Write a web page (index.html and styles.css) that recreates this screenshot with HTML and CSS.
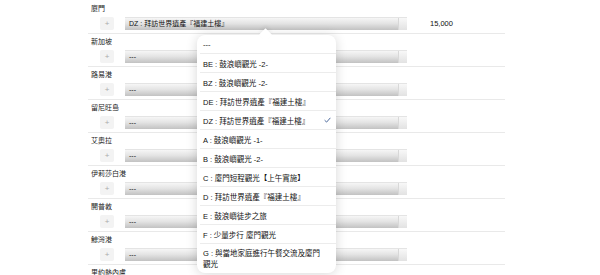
FILE: index.html
```html
<!DOCTYPE html>
<html>
<head>
    <title>行程選擇</title>
    <link rel="stylesheet" href="styles.css">
</head>
<body>
    <div class="page">
        <div class="port-row">
            <div class="port-name">廈門</div>
            <div class="port-controls">
                <span class="add-btn">+</span>
                <div class="tour-select"><span class="tour-value">DZ : 拜訪世界遺產『福建土樓』</span><span class="select-cap"></span></div>
                <span class="price">15,000</span>
            </div>
        </div>
        <div class="port-row">
            <div class="port-name">新加坡</div>
            <div class="port-controls">
                <span class="add-btn">+</span>
                <div class="tour-select"><span class="tour-value">---</span><span class="select-cap"></span></div>
            </div>
        </div>
        <div class="port-row">
            <div class="port-name">路易港</div>
            <div class="port-controls">
                <span class="add-btn">+</span>
                <div class="tour-select"><span class="tour-value">---</span><span class="select-cap"></span></div>
            </div>
        </div>
        <div class="port-row">
            <div class="port-name">留尼旺島</div>
            <div class="port-controls">
                <span class="add-btn">+</span>
                <div class="tour-select"><span class="tour-value">---</span><span class="select-cap"></span></div>
            </div>
        </div>
        <div class="port-row">
            <div class="port-name">艾奧拉</div>
            <div class="port-controls">
                <span class="add-btn">+</span>
                <div class="tour-select"><span class="tour-value">---</span><span class="select-cap"></span></div>
            </div>
        </div>
        <div class="port-row">
            <div class="port-name">伊莉莎白港</div>
            <div class="port-controls">
                <span class="add-btn">+</span>
                <div class="tour-select"><span class="tour-value">---</span><span class="select-cap"></span></div>
            </div>
        </div>
        <div class="port-row">
            <div class="port-name">開普敦</div>
            <div class="port-controls">
                <span class="add-btn">+</span>
                <div class="tour-select"><span class="tour-value">---</span><span class="select-cap"></span></div>
            </div>
        </div>
        <div class="port-row">
            <div class="port-name">鯨灣港</div>
            <div class="port-controls">
                <span class="add-btn">+</span>
                <div class="tour-select"><span class="tour-value">---</span><span class="select-cap"></span></div>
            </div>
        </div>
        <div class="port-row">
            <div class="port-name">里約熱內盧</div>
            <div class="port-controls">
                <span class="add-btn">+</span>
                <div class="tour-select"><span class="tour-value">---</span><span class="select-cap"></span></div>
            </div>
        </div>

        <!-- option popover of the first select -->
        <div class="popover">
            <span class="popover-arrow"></span>
            <ul class="option-list">
                <li class="option">---</li>
                <li class="option">BE : 鼓浪嶼觀光 -2-</li>
                <li class="option">BZ : 鼓浪嶼觀光 -2-</li>
                <li class="option">DE : 拜訪世界遺產『福建土樓』</li>
                <li class="option selected">DZ : 拜訪世界遺產『福建土樓』
                    <svg class="check" width="7" height="6" viewBox="0 0 7 6"><path d="M0.6 3.2 L2.6 5.1 L6.4 0.8" fill="none" stroke="#4d6a9c" stroke-width="1"/></svg>
                </li>
                <li class="option">A : 鼓浪嶼觀光 -1-</li>
                <li class="option">B : 鼓浪嶼觀光 -2-</li>
                <li class="option">C : 廈門短程觀光【上午實施】</li>
                <li class="option">D : 拜訪世界遺產『福建土樓』</li>
                <li class="option">E : 鼓浪嶼徒步之旅</li>
                <li class="option">F : 少量步行 廈門觀光</li>
                <li class="option option-tall">G : 與當地家庭進行午餐交流及廈門觀光</li>
            </ul>
        </div>
    </div>
</body>
</html>
```

FILE: styles.css
```css
body {
    margin: 0;
    padding: 0;
    background-color: #fff;
    font-family: "Liberation Sans", "Noto Sans CJK TC", sans-serif;
    color: #111;
    overflow: hidden;
}

.page {
    position: relative;
    margin-left: 88px;
    width: 417px;
}

.port-row {
    padding: 3px 0 3px 0;
    border-bottom: 1px solid #e9e9e9;
}

.port-row:first-child {
    padding-top: 4px;
}

.port-name {
    padding-left: 3px;
    font-size: 7px;
    line-height: 10px;
    color: #1a1a1a;
}

.port-controls {
    display: flex;
    align-items: center;
    margin-top: 3px;
    height: 13px;
}

.add-btn {
    width: 14px;
    height: 13px;
    margin-left: 12px;
    background-color: #f3f3f3;
    border-radius: 2px;
    color: #aaa;
    font-size: 8px;
    line-height: 13px;
    text-align: center;
}

.tour-select {
    display: flex;
    width: 282px;
    height: 12px;
    margin-left: 11px;
    border-top: 1px solid #e4e4e4;
    background: linear-gradient(#f6f6f6, #e4e4e4 45%, #c2c2c2);
}

.tour-value {
    flex: 1;
    padding-left: 4px;
    font-size: 7px;
    line-height: 12px;
    color: #111;
}

.select-cap {
    width: 8px;
    border-left: 1px solid #d8d8d8;
    background: linear-gradient(#f8f8f8, #e2e2e2);
}

.price {
    margin-left: 23px;
    font-size: 7.5px;
    color: #111;
}

.popover {
    position: absolute;
    left: 109px;
    top: 35px;
    width: 139px;
    background-color: #fff;
    border-radius: 8px;
    box-shadow: 0 1px 12px rgba(0, 0, 0, 0.16);
}

.popover-arrow {
    position: absolute;
    top: -5px;
    left: 64px;
    width: 9px;
    height: 9px;
    background-color: #fff;
    transform: rotate(45deg);
    box-shadow: -2px -2px 4px rgba(0, 0, 0, 0.05);
}

.option-list {
    position: relative;
    list-style-type: none;
    margin: 0;
    padding: 0;
}

.option {
    display: flex;
    justify-content: space-between;
    align-items: center;
    height: 18px;
    margin-left: 3px;
    padding: 0 13px 0 3px;
    border-bottom: 1px solid #ececec;
    font-size: 7.5px;
    color: #111;
}

.option .check {
    margin-right: -8px;
}

.option-tall {
    display: block;
    height: auto;
    padding-top: 4px;
    padding-bottom: 3px;
    line-height: 11px;
    border-bottom: none;
}
```
